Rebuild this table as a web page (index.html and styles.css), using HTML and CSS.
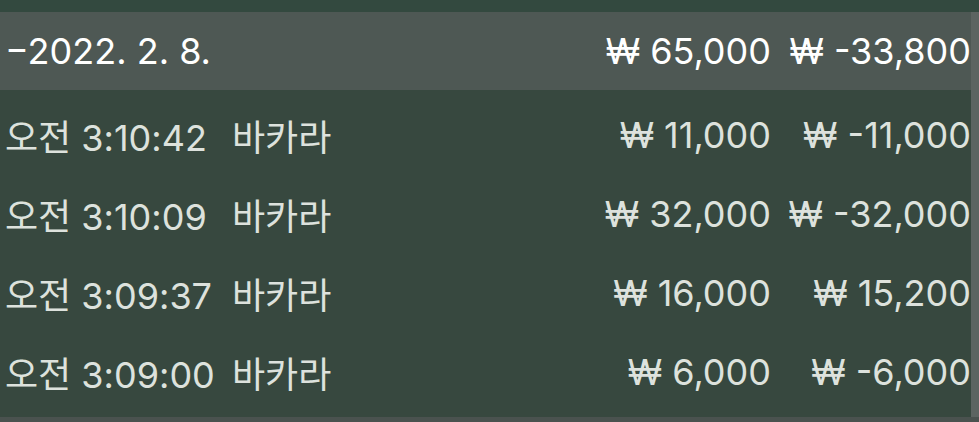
FILE: index.html
```html
<!DOCTYPE html>
<html lang="ko">
<head>
<meta charset="utf-8">
<link rel="stylesheet" href="styles.css">
</head>
<body>
<div class="top-strip"></div>
<div class="frame">
  <div class="table">
    <div class="row header">
      <span class="date">−2022. 2. 8.</span>
      <span class="amount">₩ 65,000</span>
      <span class="result">₩ -33,800</span>
    </div>
    <div class="list">
      <div class="row">
        <span class="time">오전 3:10:42</span>
        <span class="game">바카라</span>
        <span class="amount">₩ 11,000</span>
        <span class="result">₩ -11,000</span>
      </div>
      <div class="row">
        <span class="time">오전 3:10:09</span>
        <span class="game">바카라</span>
        <span class="amount">₩ 32,000</span>
        <span class="result">₩ -32,000</span>
      </div>
      <div class="row">
        <span class="time">오전 3:09:37</span>
        <span class="game">바카라</span>
        <span class="amount">₩ 16,000</span>
        <span class="result">₩ 15,200</span>
      </div>
      <div class="row">
        <span class="time">오전 3:09:00</span>
        <span class="game">바카라</span>
        <span class="amount">₩ 6,000</span>
        <span class="result">₩ -6,000</span>
      </div>
    </div>
  </div>
  <div class="scrollbar"></div>
</div>
<div class="bottom-strip"></div>
</body>
</html>
```
FILE: styles.css
```css
html, body {
  margin: 0;
  padding: 0;
}
body {
  width: 979px;
  height: 422px;
  overflow: hidden;
  background: #37483f;
  font-family: Inter, "Noto Sans CJK KR", sans-serif;
  font-size: 36px;
  color: #dde2dd;
}
.top-strip {
  height: 12px;
  background: #33493f;
}
.frame {
  display: flex;
  height: 405px;
}
.table {
  flex: 1;
  display: flex;
  flex-direction: column;
}
.row {
  display: grid;
  grid-template-columns: 227px 1fr 200px 200px;
  align-items: center;
  height: 79px;
  padding-left: 5px;
}
.row.header {
  height: 78px;
  background: #4e5854;
  color: #ffffff;
}
.row.header .date {
  grid-column: 1 / 3;
}
.list {
  padding-top: 5px;
  background: #37483f;
  flex: 1;
}
.amount, .result {
  text-align: right;
  white-space: nowrap;
}
.time, .game {
  white-space: nowrap;
}
.scrollbar {
  width: 8px;
  background: #5c6461;
}
.bottom-strip {
  height: 5px;
  background: #4a524f;
}
```
